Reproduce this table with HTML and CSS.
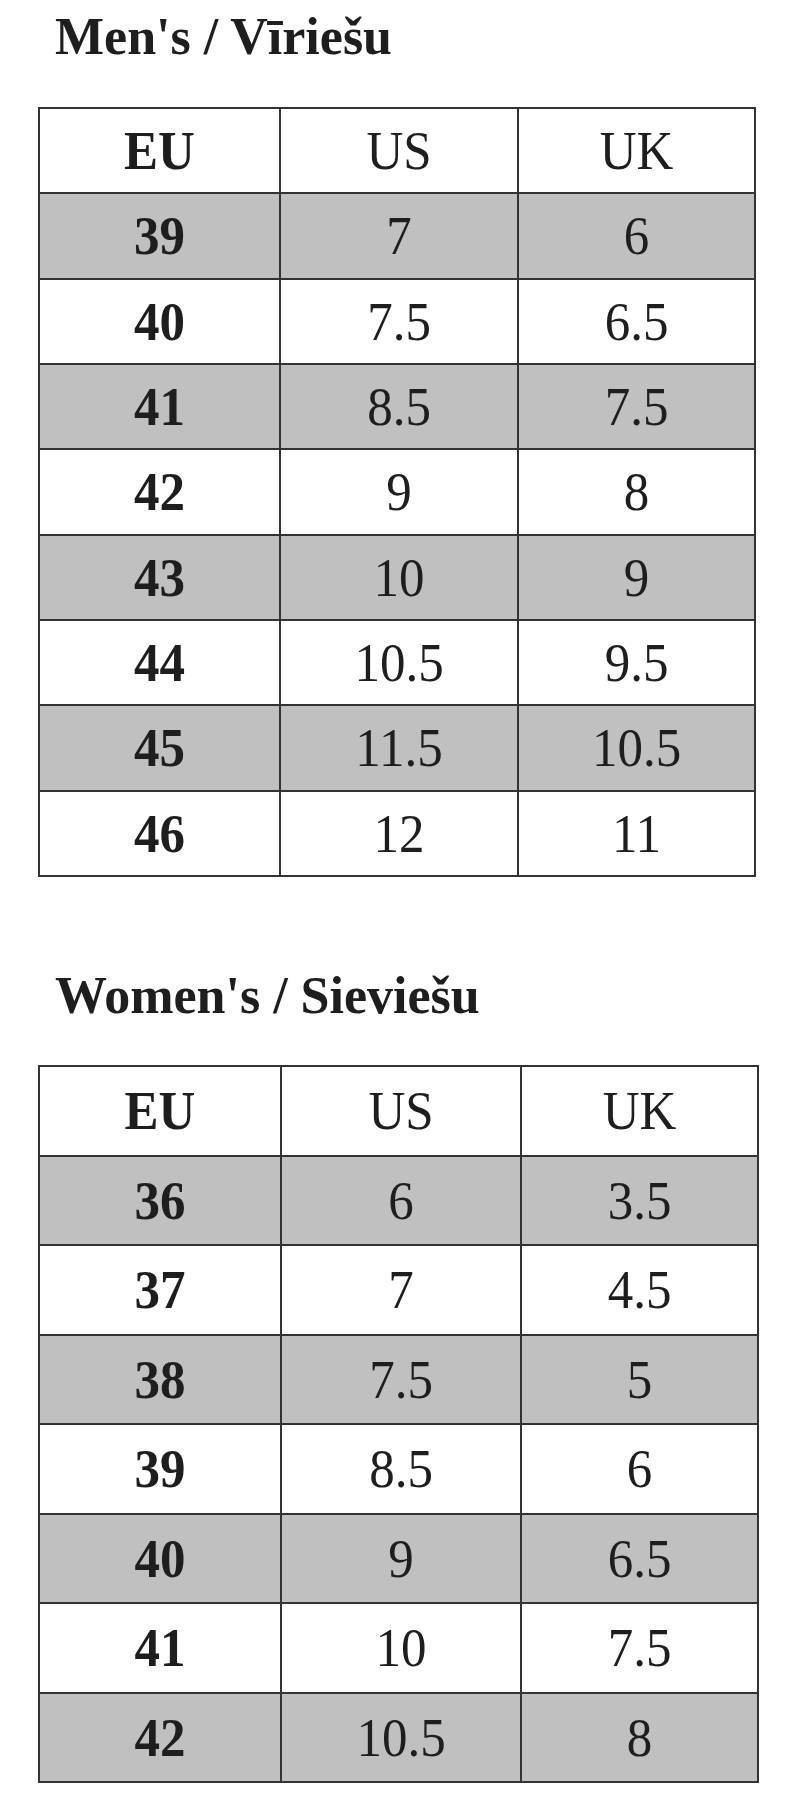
FILE: index.html
```html
<!DOCTYPE html>
<html lang="en">
<head>
<meta charset="utf-8">
<title>Size chart</title>
<link rel="stylesheet" href="styles.css">
</head>
<body>
<main class="page">
  <section class="block block-men">
    <h2 class="title">Men's / Vīriešu</h2>
    <div class="chart chart-men">
      <div class="cell head b"><span>EU</span></div><div class="cell head"><span>US</span></div><div class="cell head"><span>UK</span></div>
      <div class="cell g b"><span>39</span></div><div class="cell g"><span>7</span></div><div class="cell g"><span>6</span></div>
      <div class="cell b"><span>40</span></div><div class="cell"><span>7.5</span></div><div class="cell"><span>6.5</span></div>
      <div class="cell g b"><span>41</span></div><div class="cell g"><span>8.5</span></div><div class="cell g"><span>7.5</span></div>
      <div class="cell b"><span>42</span></div><div class="cell"><span>9</span></div><div class="cell"><span>8</span></div>
      <div class="cell g b"><span>43</span></div><div class="cell g"><span>10</span></div><div class="cell g"><span>9</span></div>
      <div class="cell b"><span>44</span></div><div class="cell"><span>10.5</span></div><div class="cell"><span>9.5</span></div>
      <div class="cell g b"><span>45</span></div><div class="cell g"><span>11.5</span></div><div class="cell g"><span>10.5</span></div>
      <div class="cell b"><span>46</span></div><div class="cell"><span>12</span></div><div class="cell"><span>11</span></div>
    </div>
  </section>
  <section class="block block-women">
    <h2 class="title">Women's / Sieviešu</h2>
    <div class="chart chart-women">
      <div class="cell head b"><span>EU</span></div><div class="cell head"><span>US</span></div><div class="cell head"><span>UK</span></div>
      <div class="cell g b"><span>36</span></div><div class="cell g"><span>6</span></div><div class="cell g"><span>3.5</span></div>
      <div class="cell b"><span>37</span></div><div class="cell"><span>7</span></div><div class="cell"><span>4.5</span></div>
      <div class="cell g b"><span>38</span></div><div class="cell g"><span>7.5</span></div><div class="cell g"><span>5</span></div>
      <div class="cell b"><span>39</span></div><div class="cell"><span>8.5</span></div><div class="cell"><span>6</span></div>
      <div class="cell g b"><span>40</span></div><div class="cell g"><span>9</span></div><div class="cell g"><span>6.5</span></div>
      <div class="cell b"><span>41</span></div><div class="cell"><span>10</span></div><div class="cell"><span>7.5</span></div>
      <div class="cell g b"><span>42</span></div><div class="cell g"><span>10.5</span></div><div class="cell g"><span>8</span></div>
    </div>
  </section>
</main>
</body>
</html>
```

FILE: styles.css
```css
* {
  box-sizing: border-box;
}

html, body {
  margin: 0;
  padding: 0;
  background: #ffffff;
}

body {
  font-family: "Liberation Serif", "Times New Roman", serif;
  color: #1e1e1e;
}

.page {
  display: flex;
  flex-direction: column;
  padding: 7px 0 0 38px;
}

.block {
  display: flex;
  flex-direction: column;
}

.block-women {
  margin-top: 89px;
}

.title {
  margin: 0 0 40px 0;
  padding-left: 17px;
  font-size: 52px;
  line-height: 60px;
  font-weight: bold;
  height: 60px;
  white-space: nowrap;
}

.block-women .title {
  margin-bottom: 39px;
}

.chart {
  display: grid;
  border-top: 2px solid #333333;
  border-left: 2px solid #333333;
}

.chart-men {
  width: 718px;
  height: 770px;
  grid-template-columns: 241px 238px 1fr;
  grid-template-rows: repeat(9, 1fr);
}

.chart-women {
  width: 721px;
  height: 718px;
  grid-template-columns: 242px 240px 1fr;
  grid-template-rows: repeat(8, 1fr);
}

.cell {
  display: flex;
  align-items: center;
  justify-content: center;
  border-right: 2px solid #333333;
  border-bottom: 2px solid #333333;
  font-size: 51px;
  line-height: 1;
  padding-top: 2px;
}

.cell span {
  display: inline-block;
  transform: scaleY(1.07);
}

.cell.g {
  background: #c0c0c0;
}

.cell.b {
  font-weight: bold;
}
```
